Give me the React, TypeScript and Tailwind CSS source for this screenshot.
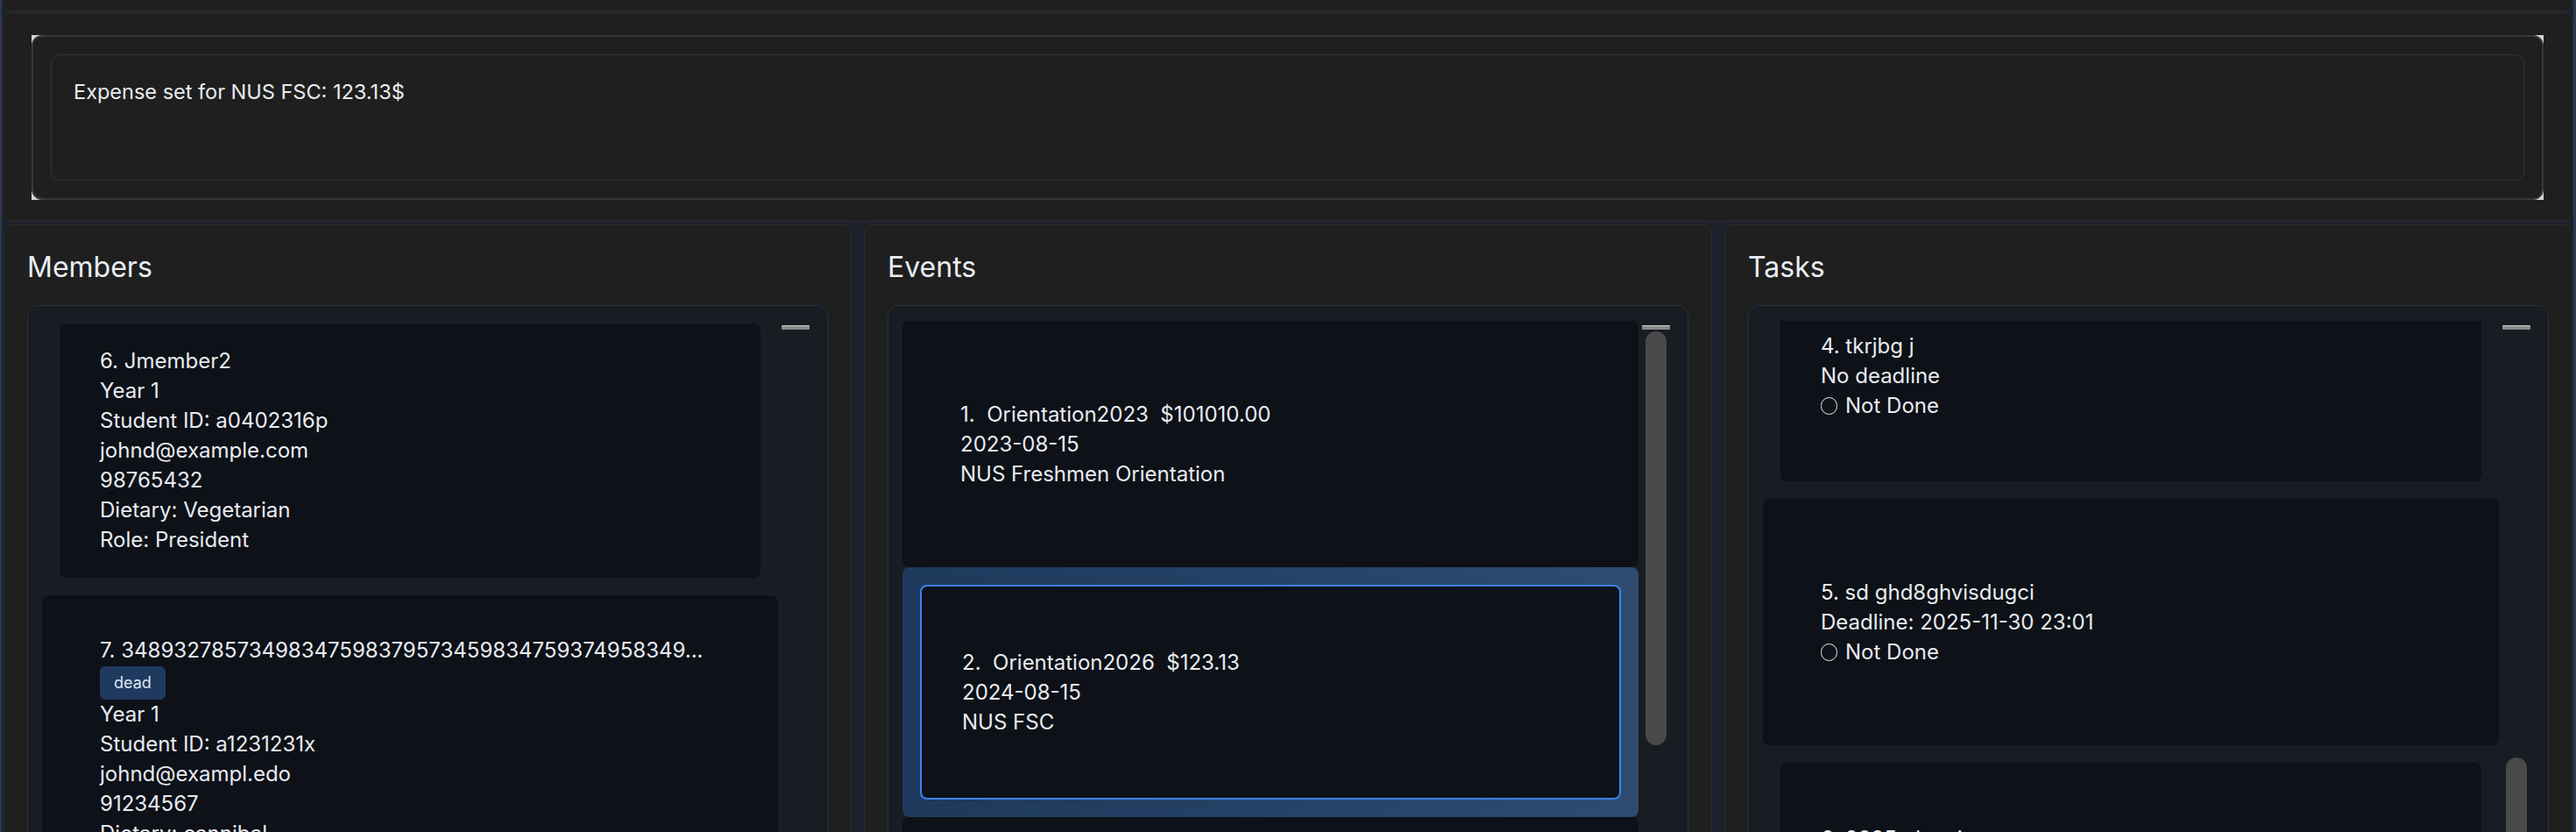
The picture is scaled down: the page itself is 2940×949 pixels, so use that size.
import React from "react";

type Variant = "odd" | "even" | "selected";

function Cell({ variant, children }: { variant: Variant; children: React.ReactNode }) {
  if (variant === "odd") {
    return (
      <div className="p-[20px] rounded-[8px] bg-[#0e1118]">
        <div className="min-h-[241px] flex flex-col justify-center px-[46px] py-[26px]">{children}</div>
      </div>
    );
  }
  if (variant === "even") {
    return (
      <div className="p-[20px]">
        <div className="min-h-[241px] flex flex-col justify-center px-[46px] py-[26px] rounded-[8px] bg-[#0e1118]">
          {children}
        </div>
      </div>
    );
  }
  return (
    <div className="p-[20px] rounded-[8px] bg-linear-to-r from-[#1d395c] to-[#2d4c70]">
      <div className="min-h-[245px] flex flex-col justify-center px-[46px] py-[24px] rounded-[8px] border-2 border-[#3b82f6] bg-[#0e1118]">
        {children}
      </div>
    </div>
  );
}

function Line({ children }: { children: React.ReactNode }) {
  return <div className="text-[24px] leading-[34px] whitespace-pre text-[#e8ebf0]">{children}</div>;
}

function NotDone() {
  return (
    <div className="flex items-center text-[24px] leading-[34px] text-[#e8ebf0]">
      <span className="inline-block w-[19px] h-[20px] rounded-full border-[1.5px] border-[#e8ebf0] mr-[9px]" />
      <span>Not Done</span>
    </div>
  );
}

function Panel({ title, children }: { title: string; children: React.ReactNode }) {
  return (
    <div className="flex flex-col h-full rounded-[10px] border border-[#2e2e2e] bg-[#1f1f1f] px-[26px] pt-[28px]">
      <div className="text-[32px] leading-[40px] text-[#e9edf2] mb-[23px]">{title}</div>
      {children}
    </div>
  );
}

function ListBox({
  contentClass,
  thumb,
  children,
}: {
  contentClass: string;
  thumb: React.ReactNode;
  children: React.ReactNode;
}) {
  return (
    <div className="flex-1 min-h-0 flex rounded-[12px] border border-[#2a303b] bg-[#181c23] pt-[17px] pl-[16px]">
      <div className="flex-1 min-w-0 overflow-hidden">
        <div className={contentClass}>{children}</div>
      </div>
      <div className="w-[32px] ml-[4px] mr-[20px] flex flex-col items-center">
        <div className="mt-[5px] h-[5px] w-[32px] rounded-[1px] border-t border-[#cfcfcf] bg-[#8a8a8a]" />
        {thumb}
      </div>
    </div>
  );
}

export default function App() {
  return (
    <div className="w-[2940px] h-[949px] overflow-hidden bg-[#1b212b] border-l-2 border-r-[3px] border-[#2c3a50] flex flex-col font-['Inter','Noto_Sans',sans-serif]">
      {/* partially visible top panel */}
      <div className="shrink-0 h-[13px] rounded-b-[10px] border border-t-0 border-[#2e2e2e] bg-[#1f1f1f]" />

      {/* result display panel */}
      <div className="shrink-0 mt-[1px] h-[239px] rounded-[10px] border border-[#2e2e2e] bg-[#1f1f1f] pt-[25px] px-[33px]">
        <div className="h-[188px] bg-[#d6d6d6]">
          <div className="h-full rounded-[12px] border-2 border-[#383838] bg-[#1f1f1f] p-[20px]">
            <div className="h-full rounded-[10px] border border-[#2e3440] pl-[25px] pt-[25px]">
              <div className="text-[23.5px] leading-[34px] text-[#e8ebf0]">Expense set for NUS FSC: 123.13$</div>
            </div>
          </div>
        </div>
      </div>

      {/* three columns */}
      <div className="shrink-0 mt-[3px] h-[760px] grid grid-cols-3 gap-[14px] pl-[2px] pr-[1px]">
        <Panel title="Members">
          <ListBox contentClass="mt-[-17px]" thumb={null}>
            <Cell variant="even">
              <Line>6. Jmember2</Line>
              <Line>Year 1</Line>
              <Line>Student ID: a0402316p</Line>
              <Line>johnd@example.com</Line>
              <Line>98765432</Line>
              <Line>Dietary: Vegetarian</Line>
              <Line>Role: President</Line>
            </Cell>
            <Cell variant="odd">
              <Line>7. 34893278573498347598379573459834759374958349...</Line>
              <div className="self-start mt-[1px] h-[38px] px-[16px] rounded-[6px] bg-[#1f3a5e] text-[18px] leading-[38px] text-[#dce6f2]">
                dead
              </div>
              <Line>Year 1</Line>
              <Line>Student ID: a1231231x</Line>
              <Line>johnd@exampl.edo</Line>
              <Line>91234567</Line>
              <Line>Dietary: cannibal</Line>
              <Line>Role: Member</Line>
            </Cell>
          </ListBox>
        </Panel>

        <Panel title="Events">
          <ListBox
            contentClass=""
            thumb={<div className="mt-[2px] w-[24px] h-[472px] rounded-full bg-[#4a4a4a]" />}
          >
            <Cell variant="odd">
              <Line>1.  Orientation2023  $101010.00</Line>
              <Line>2023-08-15</Line>
              <Line>NUS Freshmen Orientation</Line>
            </Cell>
            <Cell variant="selected">
              <Line>2.  Orientation2026  $123.13</Line>
              <Line>2024-08-15</Line>
              <Line>NUS FSC</Line>
            </Cell>
            <Cell variant="odd">
              <Line>3.  Orientation2027  $500.00</Line>
              <Line>2025-08-15</Line>
              <Line>NUS Welcome Tea</Line>
            </Cell>
          </ListBox>
        </Panel>

        <Panel title="Tasks">
          <ListBox
            contentClass="mt-[-78px]"
            thumb={<div className="mt-[488px] w-[24px] h-[420px] rounded-full bg-[#4a4a4a]" />}
          >
            <Cell variant="even">
              <Line>4. tkrjbg j</Line>
              <Line>No deadline</Line>
              <NotDone />
            </Cell>
            <Cell variant="odd">
              <Line>5. sd ghd8ghvisdugci</Line>
              <Line>Deadline: 2025-11-30 23:01</Line>
              <NotDone />
            </Cell>
            <Cell variant="even">
              <Line>6. 2025 planning</Line>
              <Line>Deadline: 2025-12-01 10:00</Line>
              <NotDone />
            </Cell>
          </ListBox>
        </Panel>
      </div>
    </div>
  );
}
